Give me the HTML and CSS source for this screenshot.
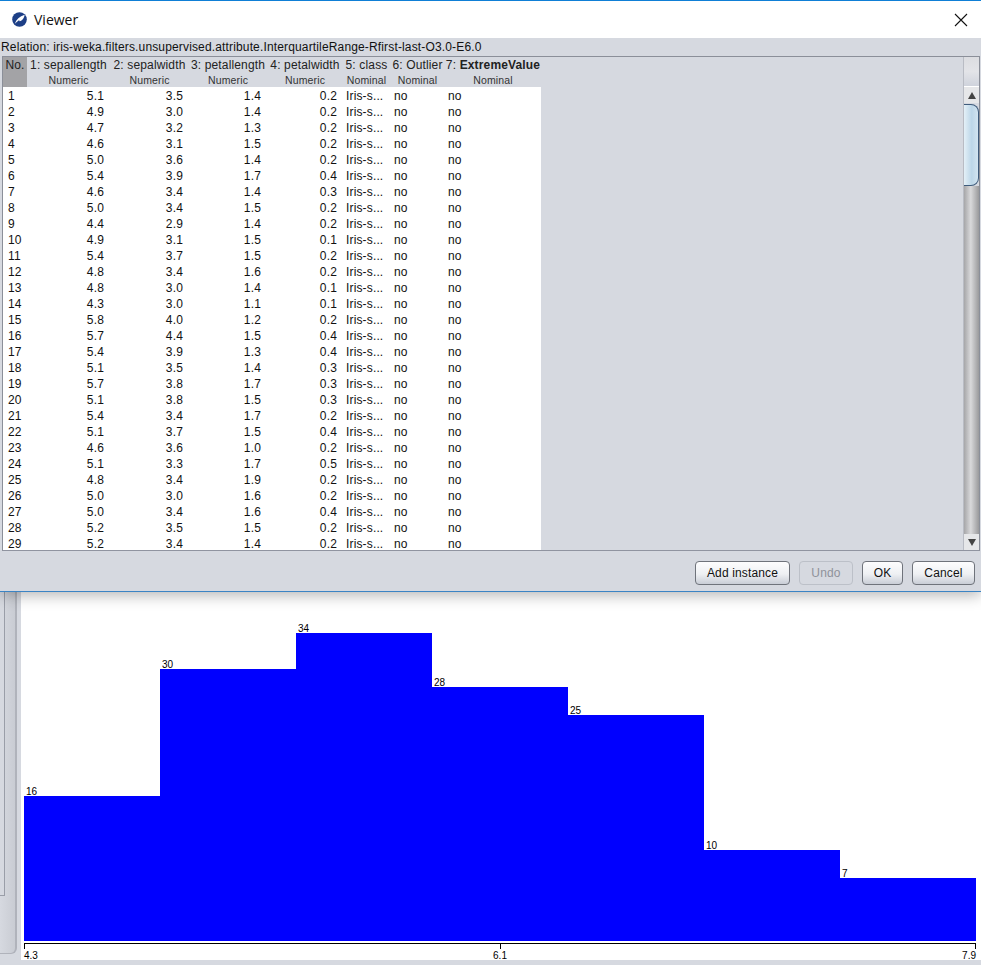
FILE: index.html
```html
<!DOCTYPE html>
<html lang="en">
<head>
  <meta charset="UTF-8">
  <title>Viewer</title>
  <link rel="stylesheet" href="styles.css">
</head>
<body>

  <div class="dialog">
    <div class="titlebar">
      <svg class="app-icon" width="15" height="15" viewBox="0 0 16 16">
        <circle cx="8" cy="8" r="7.8" fill="#1d3f86"/>
        <path d="M3 12.5 C4.5 8 8 4.5 13.5 2.8 C13 6 11.2 9.2 8 9.8 L7.6 8.6 C6 9.8 4.8 11.4 3 12.5 Z" fill="#fff"/>
      </svg>
      <span class="title">Viewer</span>
      <svg class="close-icon" width="14" height="14" viewBox="0 0 14 14">
        <path d="M1 1 L13 13 M13 1 L1 13" stroke="#111" stroke-width="1.1" fill="none"/>
      </svg>
    </div>

    <div class="relation">Relation: iris-weka.filters.unsupervised.attribute.InterquartileRange-Rfirst-last-O3.0-E6.0</div>

    <div class="panel">
      <div class="table-wrap">
        <table>
          <colgroup>
            <col class="c-no"><col class="c-1"><col class="c-2"><col class="c-3"><col class="c-4"><col class="c-5"><col class="c-6"><col class="c-7">
          </colgroup>
          <thead>
            <tr>
              <th class="no-head">No.</th>
              <th>1: sepallength<small>Numeric</small></th>
              <th>2: sepalwidth<small>Numeric</small></th>
              <th>3: petallength<small>Numeric</small></th>
              <th>4: petalwidth<small>Numeric</small></th>
              <th>5: class<small>Nominal</small></th>
              <th>6: Outlier<small>Nominal</small></th>
              <th>7: <b>ExtremeValue</b><small>Nominal</small></th>
            </tr>
          </thead>
          <tbody>
            <tr><td>1</td><td>5.1</td><td>3.5</td><td>1.4</td><td>0.2</td><td>Iris-s...</td><td>no</td><td>no</td></tr>
            <tr><td>2</td><td>4.9</td><td>3.0</td><td>1.4</td><td>0.2</td><td>Iris-s...</td><td>no</td><td>no</td></tr>
            <tr><td>3</td><td>4.7</td><td>3.2</td><td>1.3</td><td>0.2</td><td>Iris-s...</td><td>no</td><td>no</td></tr>
            <tr><td>4</td><td>4.6</td><td>3.1</td><td>1.5</td><td>0.2</td><td>Iris-s...</td><td>no</td><td>no</td></tr>
            <tr><td>5</td><td>5.0</td><td>3.6</td><td>1.4</td><td>0.2</td><td>Iris-s...</td><td>no</td><td>no</td></tr>
            <tr><td>6</td><td>5.4</td><td>3.9</td><td>1.7</td><td>0.4</td><td>Iris-s...</td><td>no</td><td>no</td></tr>
            <tr><td>7</td><td>4.6</td><td>3.4</td><td>1.4</td><td>0.3</td><td>Iris-s...</td><td>no</td><td>no</td></tr>
            <tr><td>8</td><td>5.0</td><td>3.4</td><td>1.5</td><td>0.2</td><td>Iris-s...</td><td>no</td><td>no</td></tr>
            <tr><td>9</td><td>4.4</td><td>2.9</td><td>1.4</td><td>0.2</td><td>Iris-s...</td><td>no</td><td>no</td></tr>
            <tr><td>10</td><td>4.9</td><td>3.1</td><td>1.5</td><td>0.1</td><td>Iris-s...</td><td>no</td><td>no</td></tr>
            <tr><td>11</td><td>5.4</td><td>3.7</td><td>1.5</td><td>0.2</td><td>Iris-s...</td><td>no</td><td>no</td></tr>
            <tr><td>12</td><td>4.8</td><td>3.4</td><td>1.6</td><td>0.2</td><td>Iris-s...</td><td>no</td><td>no</td></tr>
            <tr><td>13</td><td>4.8</td><td>3.0</td><td>1.4</td><td>0.1</td><td>Iris-s...</td><td>no</td><td>no</td></tr>
            <tr><td>14</td><td>4.3</td><td>3.0</td><td>1.1</td><td>0.1</td><td>Iris-s...</td><td>no</td><td>no</td></tr>
            <tr><td>15</td><td>5.8</td><td>4.0</td><td>1.2</td><td>0.2</td><td>Iris-s...</td><td>no</td><td>no</td></tr>
            <tr><td>16</td><td>5.7</td><td>4.4</td><td>1.5</td><td>0.4</td><td>Iris-s...</td><td>no</td><td>no</td></tr>
            <tr><td>17</td><td>5.4</td><td>3.9</td><td>1.3</td><td>0.4</td><td>Iris-s...</td><td>no</td><td>no</td></tr>
            <tr><td>18</td><td>5.1</td><td>3.5</td><td>1.4</td><td>0.3</td><td>Iris-s...</td><td>no</td><td>no</td></tr>
            <tr><td>19</td><td>5.7</td><td>3.8</td><td>1.7</td><td>0.3</td><td>Iris-s...</td><td>no</td><td>no</td></tr>
            <tr><td>20</td><td>5.1</td><td>3.8</td><td>1.5</td><td>0.3</td><td>Iris-s...</td><td>no</td><td>no</td></tr>
            <tr><td>21</td><td>5.4</td><td>3.4</td><td>1.7</td><td>0.2</td><td>Iris-s...</td><td>no</td><td>no</td></tr>
            <tr><td>22</td><td>5.1</td><td>3.7</td><td>1.5</td><td>0.4</td><td>Iris-s...</td><td>no</td><td>no</td></tr>
            <tr><td>23</td><td>4.6</td><td>3.6</td><td>1.0</td><td>0.2</td><td>Iris-s...</td><td>no</td><td>no</td></tr>
            <tr><td>24</td><td>5.1</td><td>3.3</td><td>1.7</td><td>0.5</td><td>Iris-s...</td><td>no</td><td>no</td></tr>
            <tr><td>25</td><td>4.8</td><td>3.4</td><td>1.9</td><td>0.2</td><td>Iris-s...</td><td>no</td><td>no</td></tr>
            <tr><td>26</td><td>5.0</td><td>3.0</td><td>1.6</td><td>0.2</td><td>Iris-s...</td><td>no</td><td>no</td></tr>
            <tr><td>27</td><td>5.0</td><td>3.4</td><td>1.6</td><td>0.4</td><td>Iris-s...</td><td>no</td><td>no</td></tr>
            <tr><td>28</td><td>5.2</td><td>3.5</td><td>1.5</td><td>0.2</td><td>Iris-s...</td><td>no</td><td>no</td></tr>
            <tr><td>29</td><td>5.2</td><td>3.4</td><td>1.4</td><td>0.2</td><td>Iris-s...</td><td>no</td><td>no</td></tr>
          </tbody>
        </table>
      </div>
      <div class="scrollbar">
        <div class="scroll-corner"></div>
        <div class="scroll-btn"><span class="arrow-up"></span></div>
        <div class="scroll-thumb"></div>
        <div class="scroll-track"></div>
        <div class="scroll-btn"><span class="arrow-down"></span></div>
      </div>
    </div>

    <div class="controls">
      <button class="btn-add">Add instance</button>
      <button class="btn-undo" disabled>Undo</button>
      <button class="btn-ok">OK</button>
      <button class="btn-cancel">Cancel</button>
    </div>
  </div>

  <div class="behind">
    <div class="rail">
      <div class="rail-outer">
        <div class="rail-inner"></div>
      </div>
    </div>
    <div class="chart">
      <div class="bars">
        <div class="bar-col"><span>16</span><div class="bar" style="height:145px"></div></div>
        <div class="bar-col"><span>30</span><div class="bar" style="height:272px"></div></div>
        <div class="bar-col"><span>34</span><div class="bar" style="height:308px"></div></div>
        <div class="bar-col"><span>28</span><div class="bar" style="height:254px"></div></div>
        <div class="bar-col"><span>25</span><div class="bar" style="height:226px"></div></div>
        <div class="bar-col"><span>10</span><div class="bar" style="height:91px"></div></div>
        <div class="bar-col"><span>7</span><div class="bar" style="height:63px"></div></div>
      </div>
      <div class="axis">
        <i></i><i></i><i></i>
      </div>
      <div class="axis-labels">
        <span>4.3</span><span>6.1</span><span>7.9</span>
      </div>
    </div>
  </div>

</body>
</html>
```

FILE: styles.css
```css
html, body {
  margin: 0;
  height: 965px;
  overflow: hidden;
}
body {
  background-color: #d6d9e0;
  color: #111;
  font-family: "Liberation Sans", Arial, sans-serif;
  font-size: 12px;
  letter-spacing: 0.15px;
}

/* dialog */
.dialog {
  position: relative;
  z-index: 1;
  height: 592px;
  box-sizing: border-box;
  background-color: #d6d9e0;
  border-top: 1px solid #0f7fd6;
  border-bottom: 1px solid #3b84c4;
  box-shadow: 0 3px 14px rgba(0, 0, 0, 0.3);
  display: flex;
  flex-direction: column;
}
.titlebar {
  height: 37px;
  background-color: #fff;
  display: flex;
  align-items: center;
  padding: 0 13px 0 12px;
}
.title {
  font-family: "Open Sans", "Liberation Sans", sans-serif;
  font-size: 14px;
  letter-spacing: 0;
  margin-left: 7px;
  flex: 1;
}
.relation {
  height: 18px;
  line-height: 18px;
  padding-left: 1px;
  white-space: nowrap;
}

/* table panel */
.panel {
  height: 495px;
  box-sizing: border-box;
  margin: 0 1px 0 2px;
  border: 1px solid #8b8f99;
  border-bottom-color: #9094a0;
  display: flex;
}
.table-wrap {
  flex: 1;
  overflow: hidden;
}
table {
  table-layout: fixed;
  width: 538px;
  border-collapse: collapse;
  background-color: #fff;
}
.c-no { width: 24px; }
.c-1 { width: 83px; }
.c-2 { width: 79px; }
.c-3 { width: 78px; }
.c-4 { width: 76px; }
.c-5 { width: 47px; }
.c-6 { width: 55px; }
.c-7 { width: 96px; }

th {
  height: 30px;
  padding: 0;
  box-sizing: border-box;
  background-color: #d6d9e0;
  font-weight: normal;
  font-size: 12px;
  line-height: 16px;
  text-align: center;
  white-space: nowrap;
  vertical-align: top;
  color: #222;
}
th b {
  font-weight: bold;
}
th small {
  display: block;
  margin-top: 1px;
  font-size: 10.5px;
  line-height: 13px;
  color: #333;
}
th.no-head {
  background-color: #a3a3a6;
}
td {
  height: 16px;
  padding: 2px 6px 0 3px;
  box-sizing: border-box;
  line-height: 14px;
  white-space: nowrap;
}
td:nth-child(1) { padding-left: 5px; }
td:nth-child(2), td:nth-child(3), td:nth-child(4), td:nth-child(5) { text-align: right; }
td:nth-child(7) { padding-left: 4px; }

/* scrollbar */
.scrollbar {
  width: 15px;
  display: flex;
  flex-direction: column;
  border-left: 1px solid #b9bcc4;
}
.scroll-corner {
  height: 29px;
  background: linear-gradient(#dcdde1, #e3e4e8 50%, #cfd3dc);
  border-bottom: 1px solid #fff;
}
.scroll-btn {
  height: 16px;
  background-color: #e6e7e9;
  display: flex;
  align-items: center;
  justify-content: center;
}
.arrow-up, .arrow-down {
  width: 0;
  height: 0;
  border-left: 4px solid transparent;
  border-right: 4px solid transparent;
}
.arrow-up { border-bottom: 7px solid #444; }
.arrow-down { border-top: 7px solid #444; }
.scroll-thumb {
  height: 82px;
  margin-top: 1px;
  box-sizing: border-box;
  background: linear-gradient(to right, #e4f0f7, #bcd6e8 55%, #d2e4f0);
  border: 1px solid #3f5c7c;
  border-left: none;
  border-radius: 0 8px 8px 0;
}
.scroll-track {
  flex: 1;
  background: linear-gradient(to right, #a6a6a8, #d9d9db 45%, #9a9a9c);
}

/* buttons */
.controls {
  flex: 1;
  display: flex;
  justify-content: flex-end;
  align-items: center;
  gap: 9px;
  padding: 3px 6px 0 0;
}
.controls button {
  height: 24px;
  padding: 0;
  border: 1px solid #6f737b;
  border-radius: 4px;
  background: linear-gradient(#fdfdfe, #eef0f3 55%, #c9cdd6);
  color: #111;
  font-family: "Liberation Sans", Arial, sans-serif;
  font-size: 12px;
  letter-spacing: 0.15px;
}
.btn-add { width: 95px; }
.btn-undo { width: 54px; }
.btn-ok { width: 41px; }
.btn-cancel { width: 63px; }
.controls button:disabled {
  border-color: #bcc0c8;
  background: #d6d9e0;
  color: #8f929a;
}

/* window behind the dialog */
.behind {
  height: 368px;
  display: flex;
}
.rail {
  width: 21px;
  background-color: #d6d9e0;
}
.rail-outer {
  width: 15px;
  height: 361px;
  border-right: 2px solid #b0b3bb;
  border-bottom: 1px solid #b0b3bb;
  border-bottom-right-radius: 6px;
  background: linear-gradient(to right, #d6d9e0, #c9ccd3);
}
.rail-inner {
  width: 4px;
  height: 303px;
  border-right: 1px solid #9a9ea8;
  border-bottom: 1px solid #9a9ea8;
  background-color: #d6d9e0;
}
.chart {
  flex: 1;
  background-color: #fff;
  padding: 0 5px 0 3px;
  overflow: hidden;
  letter-spacing: 0;
}
.bars {
  height: 349px;
  display: flex;
  align-items: flex-end;
}
.bar-col {
  width: 136px;
  display: flex;
  flex-direction: column;
}
.bar-col span {
  font-size: 10px;
  line-height: 9px;
  padding-left: 2px;
  color: #000;
}
.bar {
  background-color: #0000ff;
}
.axis {
  margin-top: 2px;
  height: 5px;
  border-top: 1px solid #000;
  display: flex;
  justify-content: space-between;
}
.axis i {
  width: 1px;
  background-color: #000;
}
.axis-labels {
  display: flex;
  justify-content: space-between;
  font-size: 10px;
  line-height: 14px;
  color: #000;
}
```
